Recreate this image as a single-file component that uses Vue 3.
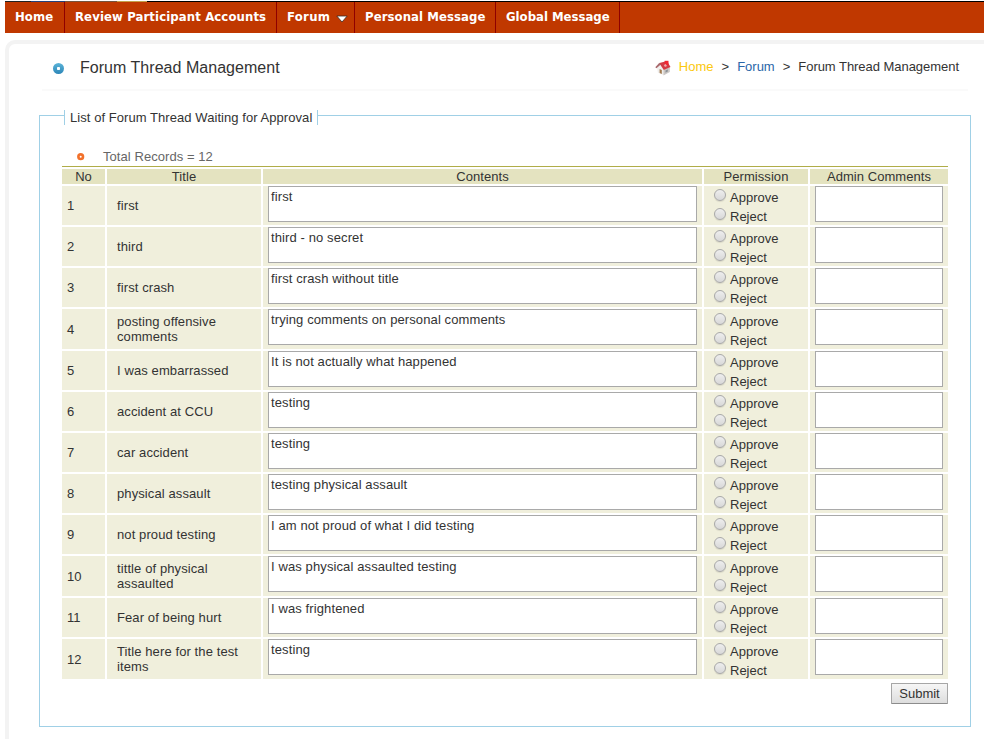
<script setup>
import { ref } from 'vue'

const menu = [
  { id: 'home', label: 'Home' },
  { id: 'review', label: 'Review Participant Accounts' },
  { id: 'forum', label: 'Forum', sub: true },
  { id: 'personal', label: 'Personal Message' },
  { id: 'global', label: 'Global Message' },
]

const threads = ref([
  { title: 'first', contents: 'first' },
  { title: 'third', contents: 'third - no secret' },
  { title: 'first crash', contents: 'first crash without title' },
  { title: 'posting offensive comments', contents: 'trying comments on personal comments' },
  { title: 'I was embarrassed', contents: 'It is not actually what happened' },
  { title: 'accident at CCU', contents: 'testing' },
  { title: 'car accident', contents: 'testing' },
  { title: 'physical assault', contents: 'testing physical assault' },
  { title: 'not proud testing', contents: 'I am not proud of what I did testing' },
  { title: 'tittle of physical assaulted', contents: 'I was physical assaulted testing' },
  { title: 'Fear of being hurt', contents: 'I was frightened' },
  { title: 'Title here for the test items', contents: 'testing' },
].map((t) => ({ ...t, permission: '', comment: '' })))

const tall = [3, 9, 11]
</script>

<template>
  <div class="page">
    <div class="banner"></div>
    <nav class="nav">
      <a v-for="m in menu" :key="m.id" :class="['item', m.id]">
        <span>{{ m.label }}</span>
        <svg v-if="m.sub" class="caret" width="12" height="8" viewBox="0 0 12 8">
          <path d="M0.8 1H11.2L6 7Z" fill="#fff" stroke="#3a2a22" stroke-width="0.8" />
        </svg>
      </a>
    </nav>

    <main class="panel">
      <header class="head">
        <svg class="dot" width="12" height="12" viewBox="0 0 12 12">
          <defs>
            <linearGradient id="blue" x1="0" y1="0" x2="0" y2="1">
              <stop offset="0" stop-color="#5cb4d8" />
              <stop offset="1" stop-color="#2c86b8" />
            </linearGradient>
          </defs>
          <circle cx="6.5" cy="6.5" r="5.5" fill="url(#blue)" />
          <rect x="5" y="5" width="3" height="3" rx="0.8" fill="#fff" />
        </svg>
        <h1>Forum Thread Management</h1>
        <div class="crumbs">
          <svg class="house" width="16" height="16" viewBox="0 0 16 16">
            <path d="M2 8L5 5.5L9 9.5V15.2L3 12.8Z" fill="#f0eeec" />
            <path d="M8.5 10L14.8 7V12L8.5 15.4Z" fill="#cbc7c4" />
            <path d="M4.5 3L12 1L15.5 7L8.8 10L5 4.5Z" fill="#d43b45" />
            <path d="M0.3 7.2L4.4 2.8L5.8 4.4L1.5 8.2Z" fill="#a8686c" />
            <path d="M9.6 .8H13.5V5H9.6Z" fill="#ee2733" />
            <path d="M8.8 5L10.8 4L12 6L10 7Z" fill="#eda9ab" />
            <path d="M4.6 9L6.8 10V14L4.6 13.1Z" fill="#a27b50" />
            <path d="M10.5 10.5L12.8 9.4V11.4L10.5 12.7Z" fill="#8d9297" />
          </svg>
          <a class="home-link">Home</a>
          <span>&gt;</span>
          <a class="forum-link">Forum</a>
          <span>&gt;</span>
          <span class="current">Forum Thread Management</span>
        </div>
      </header>

      <section class="group">
        <div class="legend">List of Forum Thread Waiting for Approval</div>
        <div class="total">
          <svg width="10" height="10" viewBox="0 0 10 10">
            <circle cx="4.7" cy="4.7" r="3.6" fill="#f2712b" />
            <circle cx="4.7" cy="4.7" r="1" fill="#fff" />
          </svg>
          <span>Total Records = 12</span>
        </div>

        <div class="table">
          <div class="row th">
            <div>No</div>
            <div>Title</div>
            <div>Contents</div>
            <div>Permission</div>
            <div>Admin Comments</div>
          </div>
          <div v-for="(t, i) in threads" :key="i" :class="['row', { tall: tall.includes(i) }]">
            <div class="no">{{ i + 1 }}</div>
            <div class="title"><span>{{ t.title }}</span></div>
            <div class="area"><textarea v-model="t.contents"></textarea></div>
            <div class="perm">
              <label><input v-model="t.permission" type="radio" :name="'p' + i" value="approve" />Approve</label>
              <label><input v-model="t.permission" type="radio" :name="'p' + i" value="reject" />Reject</label>
            </div>
            <div class="area"><textarea v-model="t.comment"></textarea></div>
          </div>
        </div>
        <div class="actions"><button type="button">Submit</button></div>
      </section>
    </main>
  </div>
</template>

<style>
body {
  background: #fff;
}
</style>

<style scoped>
.page,
.page * {
  box-sizing: border-box;
}
.page {
  width: 985px;
  height: 740px;
  padding: 1px 1px 1px 5px;
  overflow: hidden;
  background: #fff;
  color: #333;
  font: 13px/15px "Liberation Sans", Arial, sans-serif;
}
.banner {
  height: 1px;
  background: linear-gradient(90deg, #222 0 26px, #24427c 26px 60px, #75543e 60px 112px, #c3a04c 112px 142px, #000 142px);
}
.nav {
  display: flex;
  height: 31px;
  background: #c03800;
  color: #fff;
  font: bold 13px/30px "DejaVu Sans Condensed", "DejaVu Sans", sans-serif;
  letter-spacing: 0.08px;
}
.item {
  display: flex;
  flex: none;
  align-items: center;
  padding: 0 0 1px 10px;
  border-right: 1px solid #8f0000;
  white-space: nowrap;
}
.home { width: 60px; }
.review {
  width: 212px;
  letter-spacing: 0.11px;
}
.forum {
  width: 78px;
  letter-spacing: 0.3px;
}
.personal { width: 141px; }
.global {
  width: 124px;
  letter-spacing: 0;
}
.caret {
  margin: 4px 0 0 6px;
}
.panel {
  height: 699px;
  margin-top: 7px;
  padding: 0 9px 0 30px;
  border: 4px solid #f3f3f3;
  border-right: 0;
  border-bottom: 0;
  border-top-left-radius: 10px;
}
.head {
  display: flex;
  height: 47px;
  margin: 0 7px 0 3px;
  padding-left: 10px;
  border-bottom: 2px solid #fafafa;
}
.dot {
  margin: 18px 16px 0 0;
}
h1 {
  margin: 15px 0 0;
  font-size: 16px;
  font-weight: normal;
  line-height: 18px;
  letter-spacing: 0.03px;
}
.crumbs {
  display: flex;
  gap: 8px;
  margin: 15px 9px 0 auto;
}
.current {
  letter-spacing: -0.04px;
}
.house {
  margin: 1px 0 0;
}
.home-link { color: #fbc80e; }
.forum-link { color: #2a66a8; }
.group {
  width: 932px;
  height: 612px;
  margin: 24px 0 0;
  padding: 0 22px;
  border: 1px solid #a0d0e6;
  letter-spacing: 0.06px;
}
.legend {
  width: 254px;
  height: 15px;
  margin: -6px 0 0 2px;
  padding-left: 5px;
  border: solid #a0d0e6;
  border-width: 0 1px;
  background: #fff;
  white-space: nowrap;
}
.total {
  display: flex;
  align-items: center;
  height: 15px;
  margin-top: 24px;
  padding-left: 14px;
  color: #666;
}
.total span {
  margin-left: 17px;
}
.table {
  display: flex;
  flex-direction: column;
  gap: 2px;
  width: 886px;
  margin-top: 2px;
  border-top: 1px solid #b0ad48;
  padding-top: 2px;
}
.row {
  display: grid;
  grid-template-columns: 43px 154px 439px 104px 138px;
  grid-template-rows: 39px;
  column-gap: 2px;
}
.row.tall {
  grid-template-rows: 40px;
}
.row > div {
  display: flex;
  align-items: center;
  background: #f0efdc;
}
.row.th {
  grid-template-rows: 15px;
}
.row.th > div {
  justify-content: center;
  background: #e4e3c0;
}
.row > .no {
  padding-left: 5px;
}
.row > .title {
  padding: 0 10px;
  letter-spacing: 0.1px;
}
.row > .area {
  align-items: flex-start;
  padding: 0 5px;
}
textarea {
  display: block;
  width: 100%;
  height: 36px;
  margin: 0;
  padding: 2px;
  border: 1px solid #a9a9a9;
  background: #fff;
  color: #333;
  font: inherit;
  letter-spacing: 0.11px;
  overflow: hidden;
  resize: none;
}
.row > .perm {
  flex-direction: column;
  align-items: flex-start;
  padding: 2px 0 0 10px;
  letter-spacing: 0;
}
.tall > .perm {
  padding-top: 3px;
}
.perm label {
  display: flex;
  flex: none;
  height: 19px;
  padding-top: 2px;
}
.perm label:last-child {
  height: 17px;
}
input {
  appearance: none;
  flex: none;
  width: 12px;
  height: 12px;
  margin: -1px 4px 0 0;
  border: 1px solid #a8a8a8;
  border-radius: 50%;
  background: linear-gradient(#eeeeee, #d8d8d8);
  box-shadow: 0 1px 1px rgba(0, 0, 0, 0.1);
}
.actions {
  display: flex;
  justify-content: flex-end;
  margin-top: 4px;
}
button {
  width: 57px;
  height: 21px;
  padding: 0;
  border: 1px solid #a6a6a6;
  border-bottom-color: #8c8c8c;
  border-radius: 1px;
  background: linear-gradient(#f6f6f6, #dddddd);
  color: #333;
  font: inherit;
}
</style>
